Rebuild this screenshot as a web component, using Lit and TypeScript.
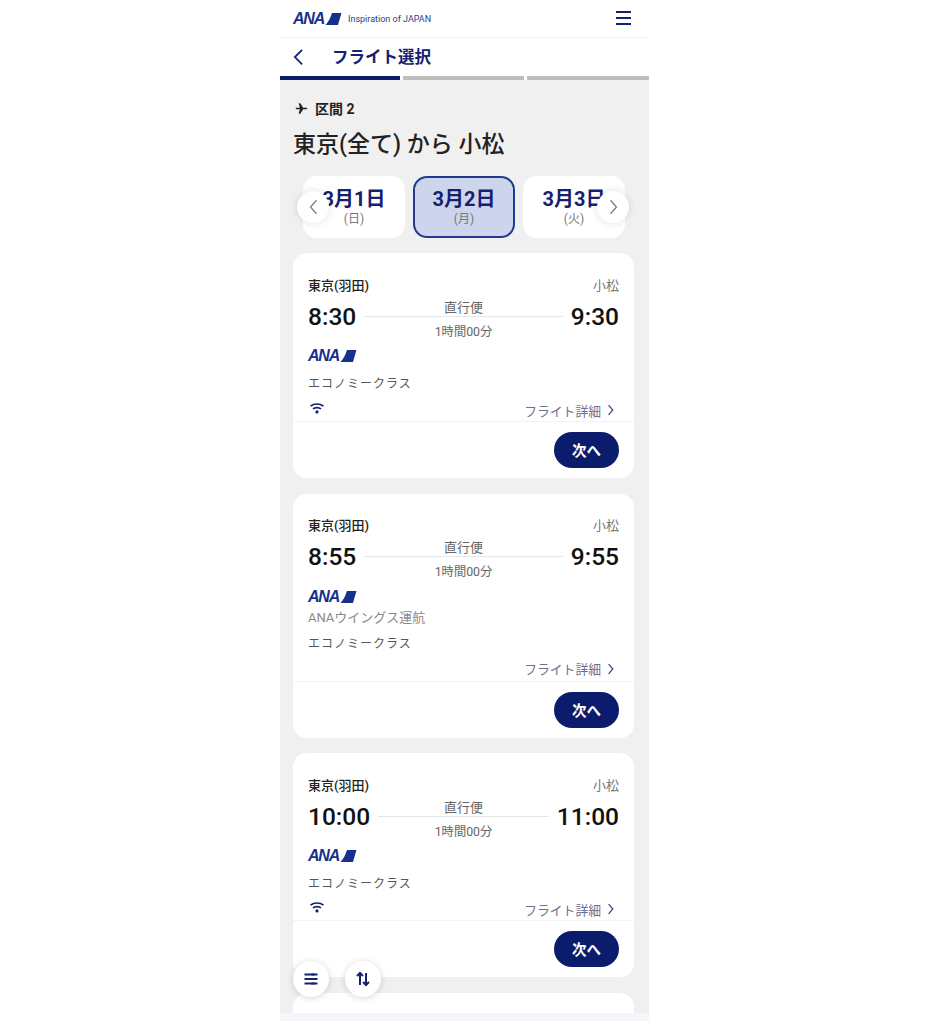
import { LitElement, html, css, svg } from "lit";
import { customElement } from "lit/decorators.js";

const logo = () => html`<span class="logo"><span class="ana">ANA</span><svg class="stripes" viewBox="0 0 16 14" aria-hidden="true"><path d="M6.5 1 H16 L12.5 13 H0 C3 10 5 6 6.5 1Z" fill="#16308c"/></svg></span>`;

const wifi = html`<svg class="wifi" viewBox="0 0 16 12" aria-hidden="true"><path d="M1.5 3.6 C5 0.8 11 0.8 14.5 3.6" /><path d="M4 6.4 C6.2 4.6 9.8 4.6 12 6.4" /><circle cx="8" cy="9.4" r="1.6" fill="#16206e" stroke="none"/></svg>`;

const chev = (d: string, cls: string) => html`<svg class=${cls} viewBox="0 0 12 20" aria-hidden="true"><path d=${d} /></svg>`;

interface Flight { dep: string; arr: string; wifi: boolean; wing: boolean; }
const flights: Flight[] = [
  { dep: "8:30", arr: "9:30", wifi: true, wing: false },
  { dep: "8:55", arr: "9:55", wifi: false, wing: true },
  { dep: "10:00", arr: "11:00", wifi: true, wing: false },
];

@customElement("app-root")
export class AppRoot extends LitElement {
  static styles = css`
    :host { display: block; width: 930px; height: 1021px; background: #fff; font-family: Roboto, "Noto Sans CJK JP", sans-serif; color: #1a1a1a; overflow: hidden; }
    .phone { position: relative; width: 369px; height: 1021px; margin-left: 280px; background: #f5f6f9; overflow: hidden; }
    .top { height: 37px; background: #fff; border-bottom: 1px solid #f1f1f1; display: flex; align-items: center; justify-content: space-between; padding: 0 18px 0 13px; }
    .brand { display: flex; align-items: center; gap: 6px; }
    .tagline { font-size: 9px; color: #2a3f8f; white-space: nowrap; }
    .logo { display: inline-flex; align-items: center; height: 14px; width: 49px; }
    .ana { font: italic 700 16px/14px "Liberation Sans", sans-serif; color: #16308c; letter-spacing: -1.2px; }
    .stripes { width: 17px; height: 14px; margin-left: 1px; overflow: visible; }
    .burger { width: 15px; height: 14px; display: flex; flex-direction: column; justify-content: space-between; margin-top: -1px; }
    .burger i { display: block; height: 2px; background: #16206e; }
    .sub { height: 38px; background: #fff; display: flex; align-items: center; padding-left: 13px; gap: 28px; }
    .back { width: 11px; height: 18px; margin-top: 2px; }
    .back path { fill: none; stroke: #16206e; stroke-width: 2; }
    .sub h1 { margin: -2px 0 0; font-size: 16.5px; font-weight: 700; color: #16206e; }
    .progress { display: grid; grid-template-columns: 120px 121px 122px; gap: 3px; height: 4px; background: #fff; }
    .progress i { display: block; background: #bdbdbd; }
    .progress i.on { background: #0a1c6b; }
    .main { height: 933px; background: #f0f0f0; padding: 19px 15px 0 13px; overflow: hidden; box-sizing: border-box; }
    .leg { display: flex; align-items: center; gap: 7px; height: 18px; font-size: 14px; font-weight: 700; color: #222; }
    .leg svg { width: 13px; height: 13px; margin-left: 2px; }
    .title { margin: 14px 0 0; font-size: 23px; line-height: 28px; font-weight: 500; color: #222; white-space: nowrap; }
    .days { position: relative; display: flex; gap: 8px; margin-top: 17px; padding-left: 10px; height: 62px; }
    .day { box-sizing: border-box; width: 102px; height: 62px; background: #fff; border-radius: 14px; display: flex; flex-direction: column; align-items: center; justify-content: center; color: #16206e; }
    .day b { font-size: 20px; line-height: 26px; font-weight: 700; margin-top: -2px; }
    .day span { font-size: 12px; line-height: 14px; color: #777; }
    .day.on { background: #ccd5ec; border: 2px solid #233a8c; }
    .arrow { position: absolute; top: 15px; width: 32px; height: 32px; border-radius: 50%; background: #fff; box-shadow: 0 0 8px rgba(0,0,0,.12); display: flex; align-items: center; justify-content: center; }
    .arrow.l { left: 4px; } .arrow.r { left: 304px; }
    .arrow svg { width: 9px; height: 16px; }
    .arrow path { fill: none; stroke: #777; stroke-width: 1.6; }
    .cards { display: flex; flex-direction: column; gap: 15.5px; margin-top: 15px; }
    .card { background: #fff; border-radius: 14px; width: 341px; }
    .body { padding: 25px 15px 3px; }
    .card.wing .body { padding: 24px 15px 4px; }
    .places { display: flex; justify-content: space-between; font-size: 13px; line-height: 16px; }
    .places b { font-weight: 500; color: #222; }
    .places span { color: #777; }
    .times { display: flex; gap: 8px; margin-top: 6px; height: 40px; }
    .time { font-size: 24.5px; font-weight: 500; line-height: 34px; color: #111; }
    .mid { flex: 1; display: flex; flex-direction: column; align-items: center; font-size: 13px; line-height: 15px; color: #666; }
    .mid span + hr + span { font-size: 12.3px; line-height: 16px; }
    .mid hr { align-self: stretch; margin: 1px 0 7px; border: 0; height: 2px; background: #e4e6ea; }
    .body > .logo { display: flex; margin-top: 9px; }
    .card.wing .body > .logo { margin-top: 10px; }
    .wingline { margin-top: 6px; font-size: 13px; line-height: 16px; color: #8a8a8a; }
    .cls { margin-top: 13px; font-size: 12px; line-height: 16px; letter-spacing: 1px; color: #555; }
    .card.wing .cls { margin-top: 10px; }
    .foot { display: flex; justify-content: space-between; align-items: center; margin-top: 10px; height: 16px; }
    .card.wing .foot, .card.third .foot { margin-top: 9px; }
    .wifi { width: 16px; height: 13px; margin-left: 1px; margin-top: -3px; }
    .wifi path { fill: none; stroke: #16206e; stroke-width: 1.7; }
    .detail { margin-left: auto; margin-right: 4px; display: flex; align-items: center; gap: 6px; font-size: 12.8px; color: #6a7090; white-space: nowrap; }
    .detail svg { width: 8px; height: 12px; }
    .detail path { fill: none; stroke: #3c4470; stroke-width: 2; }
    .action { border-top: 1px solid #f3f3f3; padding: 10px 15px; display: flex; justify-content: flex-end; }
    .next { width: 65px; height: 36px; border: 0; border-radius: 18px; background: #0a1c6b; color: #fff; font: 700 14.5px/36px "Noto Sans CJK JP", sans-serif; padding: 0; }
    .card.stub { height: 60px; }
    .fab { position: absolute; top: 961px; width: 36px; height: 36px; border-radius: 50%; background: #fff; box-shadow: 0 1px 7px rgba(0,0,0,.16); display: flex; align-items: center; justify-content: center; }
    .fab.a { left: 13px; } .fab.b { left: 65px; }
    .fab svg { width: 18px; height: 18px; }
    .fab path { fill: none; stroke: #16206e; stroke-width: 2; }
    .fab .knob { stroke-width: 3; }
  `;

  private card(f: Flight, i: number) {
    return html`<article class="card ${f.wing ? "wing" : ""} ${i === 2 ? "third" : ""}">
      <div class="body">
        <div class="places"><b>東京(羽田)</b><span>小松</span></div>
        <div class="times">
          <span class="time">${f.dep}</span>
          <div class="mid"><span>直行便</span><hr /><span>1時間00分</span></div>
          <span class="time">${f.arr}</span>
        </div>
        ${logo()}
        ${f.wing ? html`<div class="wingline">ANAウイングス運航</div>` : ""}
        <div class="cls">エコノミークラス</div>
        <div class="foot">${f.wifi ? wifi : ""}<span class="detail">フライト詳細 ${chev("M2 2 L9 10 L2 18", "")}</span></div>
      </div>
      <div class="action"><button class="next">次へ</button></div>
    </article>`;
  }

  render() {
    return html`<div class="phone">
      <header class="top">
        <div class="brand">${logo()}<span class="tagline">Inspiration of JAPAN</span></div>
        <div class="burger"><i></i><i></i><i></i></div>
      </header>
      <div class="sub">${chev("M10 1 L2 9 L10 17", "back")}<h1>フライト選択</h1></div>
      <div class="progress"><i class="on"></i><i></i><i></i></div>
      <main class="main">
        <div class="leg"><svg viewBox="0 0 16 16" aria-hidden="true">${svg`<path d="M1 7 H6 L4.5 1.5 H6.5 L10 7 H14 C15.5 7 15.5 9 14 9 H10 L6.5 14.5 H4.5 L6 9 H1 Z" fill="#222"/>`}</svg>区間 2</div>
        <h2 class="title">東京(全て) から 小松</h2>
        <div class="days">
          <div class="day"><b>3月1日</b><span>(日)</span></div>
          <div class="day on"><b>3月2日</b><span>(月)</span></div>
          <div class="day"><b>3月3日</b><span>(火)</span></div>
          <div class="arrow l">${chev("M10 1 L2 10 L10 19", "")}</div>
          <div class="arrow r">${chev("M2 1 L10 10 L2 19", "")}</div>
        </div>
        <div class="cards">
          ${flights.map((f, i) => this.card(f, i))}
          <div class="card stub"></div>
        </div>
      </main>
      <div class="fab a"><svg viewBox="0 0 18 18" aria-hidden="true"><path d="M2.5 4.5 H15.5 M2.5 9 H15.5 M2.5 13.5 H15.5" /><path class="knob" d="M11 3.5 V5.5 M6.5 8 V10 M11 12.5 V14.5" /></svg></div>
      <div class="fab b"><svg viewBox="0 0 18 18" aria-hidden="true"><path d="M6 15 V3 M3 6 L6 3 L9 6" /><path d="M12 3 V15 M9 12 L12 15 L15 12" /></svg></div>
    </div>`;
  }
}
